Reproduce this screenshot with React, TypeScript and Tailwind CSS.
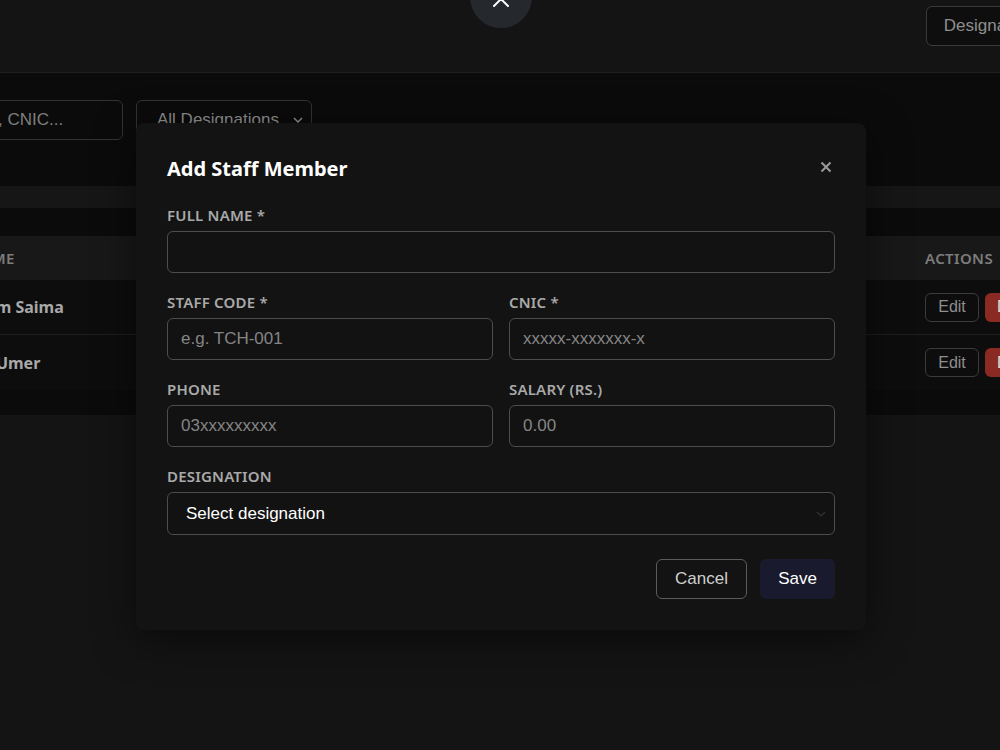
import React from "react";

const sans = { fontFamily: '"Noto Sans", "Open Sans", sans-serif' };
const arial = { fontFamily: '"Liberation Sans", Arial, sans-serif' };

function Label({ children }: { children: React.ReactNode }) {
  return (
    <div className="text-[15px] leading-[21px] font-semibold tracking-[0.2px] text-[#a9a9a9] mb-[5px]" style={sans}>
      {children}
    </div>
  );
}

function Field({ label, placeholder }: { label: string; placeholder?: string }) {
  return (
    <div className="flex flex-col">
      <Label>{label}</Label>
      <div
        className="h-[42px] rounded-md border border-[#4d4d4d] bg-[#121212] px-[13px] flex items-center text-[17px] text-[#858585]"
        style={arial}
      >
        {placeholder}
      </div>
    </div>
  );
}

export default function App() {
  return (
    <div className="relative w-[1000px] h-[750px] overflow-hidden bg-[#141414]">
      {/* header */}
      <div className="relative h-[73px] border-b border-[#1f1f1f] bg-[#141414] flex justify-end items-start pt-[6px]">
        <div
          className="mr-[-60px] h-[40px] px-[17px] flex items-center rounded-md border border-[#3a3a3a] bg-[#0e0e0e] text-[17px] text-[#8e8e8e]"
          style={arial}
        >
          Designations
        </div>
      </div>
      <div className="absolute left-[470px] top-[-34px] w-[62px] h-[62px] rounded-full bg-[#25282d] flex items-end justify-center pb-[20px]">
        <svg width="18" height="18" viewBox="0 0 18 18">
          <path d="M2 2 L16 16 M16 2 L2 16" stroke="#ffffff" strokeWidth="2" strokeLinecap="round" />
        </svg>
      </div>

      {/* main dark area */}
      <div className="bg-[#0b0b0b] h-[342px] flex flex-col">
        <div className="flex items-center gap-[13px] pt-[27px] ml-[-189px]">
          <div
            className="w-[312px] h-[40px] rounded-md border border-[#333] px-4 flex items-center text-[17px] text-[#7e7e7e] whitespace-nowrap"
            style={arial}
          >
            Search by name, code, CNIC...
          </div>
          <div
            className="w-[176px] h-[40px] rounded-md border border-[#333] pl-5 pr-[7px] flex items-center justify-between text-[17px] text-[#8e8e8e]"
            style={arial}
          >
            <span>All Designations</span>
            <svg width="12" height="12" viewBox="0 0 12 12">
              <path d="M2 4 L6 8 L10 4" stroke="#8e8e8e" strokeWidth="1.5" fill="none" />
            </svg>
          </div>
        </div>
        <div className="mt-[46px] h-[22px] bg-[#161616]" />
        <div className="h-[28px]" />
        <div className="ml-[-53px] w-[1153px] flex flex-col">
          <div className="h-[44px] bg-[#181818] flex items-center text-[15px] font-semibold tracking-wide text-[#7c7c7c]" style={sans}>
            <div className="flex-1 pl-[22px]">NAME</div>
            <div className="w-[199px] pl-6">ACTIONS</div>
          </div>
          {["Mam Saima", "Sir Umer"].map((n, i) => (
            <div key={n} className={`h-[55px] flex items-center bg-[#0d0d0d] ${i === 0 ? "border-b border-[#1e1e1e]" : ""}`}>
              <div className="flex-1 pl-6 text-[16px] font-bold text-[#a8a8a8]" style={sans}>
                {n}
              </div>
              <div className="w-[199px] pl-6 flex items-center gap-[6px]">
                <div className="h-[29px] w-[54px] rounded-md border border-[#3c3c3c] flex items-center justify-center text-[16px] text-[#8e8e8e]" style={arial}>
                  Edit
                </div>
                <div className="h-[29px] w-[70px] rounded-md bg-[#8a2a22] flex items-center justify-center text-[16px] text-[#ddd]" style={arial}>
                  Delete
                </div>
              </div>
            </div>
          ))}
        </div>
      </div>

      {/* modal overlay */}
      <div className="absolute inset-0 flex justify-start items-start pt-[123px] pl-[136px]">
        <div className="w-[730px] rounded-lg bg-[#131313] shadow-[0_10px_40px_rgba(0,0,0,0.5)] px-[31px] pt-[32px] pb-[31px]">
          <div className="flex items-center justify-between mb-[22px]">
            <div className="text-[20px] leading-[28px] font-bold text-white" style={sans}>
              Add Staff Member
            </div>
            <svg width="12" height="12" viewBox="0 0 12 12" className="mr-[3px] -mt-[4px]">
              <path d="M1.5 1.5 L10.5 10.5 M10.5 1.5 L1.5 10.5" stroke="#9a9a9a" strokeWidth="2" />
            </svg>
          </div>
          <div className="flex flex-col gap-[19px]">
            <Field label="FULL NAME *" />
            <div className="grid grid-cols-2 gap-x-4">
              <Field label="STAFF CODE *" placeholder="e.g. TCH-001" />
              <Field label="CNIC *" placeholder="xxxxx-xxxxxxx-x" />
            </div>
            <div className="grid grid-cols-2 gap-x-4">
              <Field label="PHONE" placeholder="03xxxxxxxxx" />
              <Field label="SALARY (RS.)" placeholder="0.00" />
            </div>
            <div className="flex flex-col">
              <Label>DESIGNATION</Label>
              <div
                className="h-[43px] rounded-md border border-[#4d4d4d] bg-[#121212] pl-[18px] pr-[7px] flex items-center justify-between text-[17px] text-white"
                style={arial}
              >
                <span>Select designation</span>
                <svg width="12" height="12" viewBox="0 0 12 12">
                  <path d="M2 4 L6 8 L10 4" stroke="#333" strokeWidth="1.2" fill="none" />
                </svg>
              </div>
            </div>
          </div>
          <div className="flex justify-end gap-[13px] mt-[24px]">
            <div
              className="w-[91px] h-[40px] rounded-md border border-[#5c5c5c] flex items-center justify-center text-[17px] text-[#cfcfcf]"
              style={arial}
            >
              Cancel
            </div>
            <div
              className="w-[75px] h-[40px] rounded-md bg-[#1a1a2e] flex items-center justify-center text-[17px] text-white"
              style={arial}
            >
              Save
            </div>
          </div>
        </div>
      </div>
    </div>
  );
}
